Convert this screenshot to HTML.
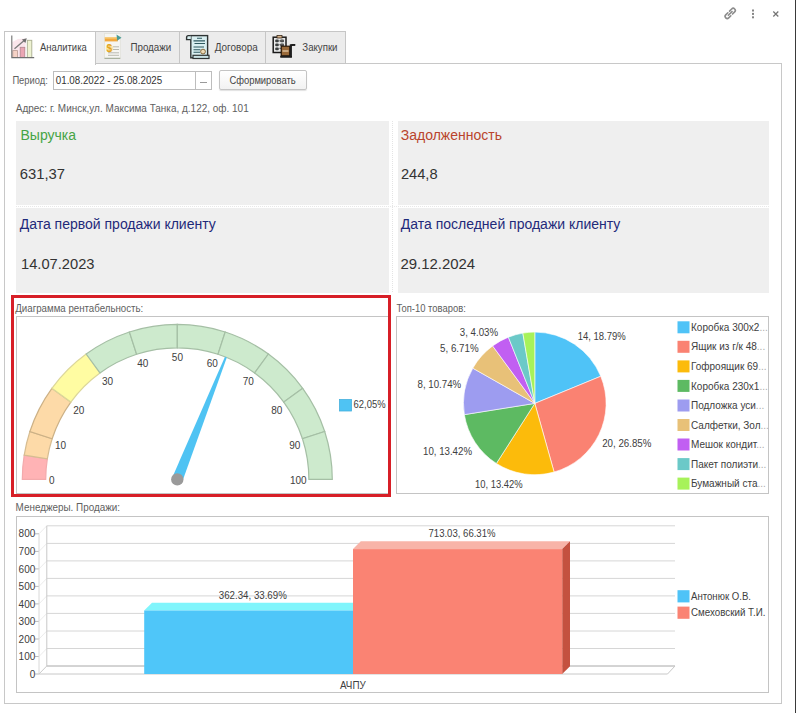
<!DOCTYPE html>
<html><head><meta charset="utf-8">
<style>
html,body{margin:0;padding:0;background:#fff;}
body{width:796px;height:713px;overflow:hidden;position:relative;font-family:"Liberation Sans",sans-serif;color:#333;}
.a{position:absolute;}
.t{position:absolute;white-space:nowrap;line-height:1;}
.tab{position:absolute;top:31px;height:33px;box-sizing:border-box;border:1px solid #c6c6c6;background:#ececec;}
.tab.act{background:#fff;border-bottom:none;height:34px;}
.box{position:absolute;background:#efefef;}
.frame{position:absolute;border:1px solid #c4c4c4;box-sizing:border-box;background:#fff;}
</style></head><body>
<!-- right dark edge -->
<div class="a" style="left:795px;top:0;width:1px;height:713px;background:#3a3a3a"></div>

<!-- top-right icons -->
<svg class="a" style="left:720px;top:0px" width="70" height="30" viewBox="720 0 70 30">
  <g transform="translate(730.2 13.4) rotate(-45)" fill="none" stroke="#8c8c8c" stroke-width="1.6" stroke-linecap="round">
    <path d="M-1.2 -2.1H-4.2A2.1 2.1 0 0 0 -4.2 2.1H-1.2"/>
    <path d="M1.2 -2.1H4.2A2.1 2.1 0 0 1 4.2 2.1H1.2"/>
    <path d="M-2.6 0H2.6"/>
  </g>
  <g fill="#858585">
    <rect x="752" y="9.5" width="2" height="2"/>
    <rect x="752" y="12.9" width="2" height="2"/>
    <rect x="752" y="16.3" width="2" height="2"/>
  </g>
  <g stroke="#747474" stroke-width="1.2">
    <path d="M773.3 11.5 l5 5 M778.3 11.5 l-5 5"/>
  </g>
</svg>

<!-- content panel -->
<div class="a" style="left:4px;top:63px;width:778px;height:641px;box-sizing:border-box;border:1px solid #c8c8c8;"></div>

<!-- tabs -->
<div class="tab" style="left:95px;width:85px"></div>
<div class="tab" style="left:179px;width:87px"></div>
<div class="tab" style="left:265px;width:81px"></div>
<div class="tab act" style="left:4px;width:92px"></div>


<!-- period row -->
<div class="a" style="left:53px;top:71px;width:159px;height:19px;box-sizing:border-box;border:1px solid #bdbdbd;background:#fff"></div>
<div class="a" style="left:195px;top:72px;width:1px;height:17px;background:#bdbdbd"></div>
<div class="a" style="left:200px;top:82px;width:7px;height:1px;background:#9a9a9a"></div>
<div class="a" style="left:219px;top:70px;width:88px;height:20px;box-sizing:border-box;border:1px solid #c4c4c4;border-radius:2px;background:linear-gradient(#fff,#f2f2f2);box-shadow:0 1px 1px rgba(0,0,0,0.12)"></div>


<!-- info boxes -->
<div class="box" style="left:16px;top:121px;width:373px;height:84px"></div>
<div class="box" style="left:398px;top:121px;width:371px;height:84px"></div>
<div class="box" style="left:16px;top:208px;width:373px;height:85px"></div>
<div class="box" style="left:398px;top:208px;width:371px;height:85px"></div>
<div class="a" style="left:392px;top:121px;width:1px;height:172px;background:repeating-linear-gradient(#e4e4e4 0 1px,transparent 1px 2px)"></div>
<div class="a" style="left:16px;top:206px;width:753px;height:1px;background:repeating-linear-gradient(90deg,#e8e8e8 0 1px,transparent 1px 2px)"></div>

<!-- chart frames -->
<div class="frame" style="left:16px;top:316px;width:373px;height:178px"></div>
<div class="frame" style="left:396px;top:316px;width:373px;height:178px"></div>
<div class="frame" style="left:16px;top:516px;width:753px;height:177px"></div>

<svg class="a" style="left:0;top:0" width="796" height="713" viewBox="0 0 796 713" font-family="Liberation Sans, sans-serif">

<g>
 <polygon points="12.3,57.3 12.3,42 18,39 26,38.5 25,57.3" fill="#f9e3ea" opacity="0.9"/>
 <rect x="12.8" y="50.6" width="4.6" height="6.9" fill="#f6d2c6" stroke="#b99a92" stroke-width="0.8"/>
 <rect x="20.2" y="47.3" width="4.6" height="10.2" fill="#eaa6b3" stroke="#b38690" stroke-width="0.8"/>
 <rect x="27.3" y="40.3" width="4.5" height="17.2" fill="#eef3d2" stroke="#a9ad90" stroke-width="0.9"/>
 <path d="M11.8 35.5V57.6H34.2" fill="none" stroke="#707070" stroke-width="1.1"/>
 <path d="M14.5 48.8L24.2 40.6" stroke="#7a7a7a" stroke-width="1.3"/>
 <polygon points="26.8,38.3 21.9,39.6 25.4,43" fill="#6f6f6f"/>
</g>
<g>
 <rect x="104.5" y="33.5" width="15.8" height="24.8" fill="#f6f6f2" stroke="#e2e2da" stroke-width="0.8"/>
 <rect x="104.8" y="37.4" width="13" height="4" fill="#f2a83e"/><rect x="104.8" y="37.4" width="13" height="1.2" fill="#f8cf7a"/>
 <polygon points="116.5,34.5 121.5,37.8 117.2,40.8" fill="#4b9b94"/>
 <circle cx="109.5" cy="48.3" r="3.6" fill="#fbe7a8"/>
 <text x="106.6" y="52.3" font-size="10" font-weight="bold" fill="#e3a41f">$</text>
 <path d="M113 46.8H119M113 49.5H119M108 52.8H119M108 55.3H119" stroke="#a9a9a0" stroke-width="0.8"/>
 <path d="M104.5 58.3H120.3" stroke="#9aa58f" stroke-width="1"/>
</g>
<g>
 <rect x="190.8" y="35.6" width="16.8" height="22.2" fill="#d9eff1" stroke="#2f3434" stroke-width="1.4"/>
 <path d="M190.8 35.6H188.3Q186.6 35.6 186.6 37.6V39.6H190.8" fill="#d9eff1" stroke="#2f3434" stroke-width="1.4"/>
 <path d="M197 38.3H202M193.5 40.9H205M194.5 43.5H205M193.5 47H204M193.5 49.7H200.5M193.5 52.3H200" stroke="#2f5a60" stroke-width="1.1"/>
 <rect x="193" y="55.3" width="16" height="3.2" fill="#c9e2e4" stroke="#2f3434" stroke-width="1.2"/>
 <circle cx="203" cy="51.6" r="2.4" fill="#ecd9b4" stroke="#7c5a2a" stroke-width="0.9"/>
</g>
<g>
 <rect x="273.2" y="37.2" width="12.8" height="15.3" fill="#e9eaea" stroke="#1a1a1a" stroke-width="1.5"/>
 <rect x="277" y="35.4" width="5" height="2.6" fill="#d8b48c" stroke="#3a2a1a" stroke-width="0.8"/>
 <g fill="#3c4040"><rect x="275.2" y="39.6" width="3.6" height="2.6" rx="1"/><rect x="280.2" y="39.6" width="3.8" height="2.6" rx="1"/>
 <rect x="275.2" y="43.6" width="3.6" height="2.6" rx="1"/><rect x="280.2" y="43.6" width="3.8" height="2.6" rx="1"/>
 <rect x="275.2" y="47.6" width="3.6" height="2.6" rx="1"/></g>
 <rect x="281.3" y="46.4" width="8.6" height="9.6" fill="#7a4a22" stroke="#1e1208" stroke-width="1"/>
 <path d="M282.3 48.6H289M282.3 53.4H289" stroke="#e0a060" stroke-width="1"/>
 <path d="M282.3 51H289" stroke="#f3dcc0" stroke-width="0.9"/>
 <path d="M291 57.3V46.5Q291 44.8 292.7 44.8H295.3" fill="none" stroke="#1a1a1a" stroke-width="1.7"/>
 <path d="M280.3 56.8H292" stroke="#1a1a1a" stroke-width="1.7"/>
</g>
 <path d="M279.5 40.8H284M279.5 44.6H284M279.5 48.4H283" stroke="#5a5a5a" stroke-width="1.4"/>
 <rect x="281.3" y="46.2" width="8.4" height="9.6" fill="#9a6a3a" stroke="#2a1a0a" stroke-width="1"/>
 <path d="M282.5 51H288.5" stroke="#f3dcc0" stroke-width="1.1"/>
 <path d="M290.6 56.8V45H295" fill="none" stroke="#1e1e1e" stroke-width="1.6"/>
 <path d="M280.5 56.5H291" stroke="#1e1e1e" stroke-width="1.6"/>
</g>
<text x="39.9" y="50.9" font-size="10" fill="#444" textLength="46.9" lengthAdjust="spacingAndGlyphs">Аналитика</text>
<text x="130.4" y="50.9" font-size="10" fill="#444" textLength="40.9" lengthAdjust="spacingAndGlyphs">Продажи</text>
<text x="214.7" y="50.9" font-size="10" fill="#444" textLength="43.1" lengthAdjust="spacingAndGlyphs">Договора</text>
<text x="302.3" y="50.9" font-size="10" fill="#444" textLength="35.2" lengthAdjust="spacingAndGlyphs">Закупки</text>
<text x="12.4" y="83.6" font-size="10" fill="#606060" textLength="35.4" lengthAdjust="spacingAndGlyphs">Период:</text>
<text x="55.8" y="83.8" font-size="10" fill="#333" textLength="106.4" lengthAdjust="spacingAndGlyphs">01.08.2022 - 25.08.2025</text>
<text x="229.4" y="83.6" font-size="10" fill="#444" textLength="66.3" lengthAdjust="spacingAndGlyphs">Сформировать</text>
<text x="15.8" y="111.6" font-size="10" fill="#606060" textLength="232.9" lengthAdjust="spacingAndGlyphs">Адрес: г. Минск,ул. Максима Танка, д.122, оф. 101</text>
<text x="20.5" y="139.6" font-size="14" fill="#45a445">Выручка</text>
<text x="19.8" y="178.5" font-size="14.5" fill="#333" textLength="45.3" lengthAdjust="spacingAndGlyphs">631,37</text>
<text x="400.8" y="140" font-size="14" fill="#b9442c">Задолженность</text>
<text x="400.9" y="179" font-size="14.5" fill="#333" textLength="36.7" lengthAdjust="spacingAndGlyphs">244,8</text>
<text x="19.7" y="229.3" font-size="14" fill="#1f2a7a">Дата первой продажи клиенту</text>
<text x="21.0" y="268.5" font-size="14.5" fill="#333" textLength="73.5" lengthAdjust="spacingAndGlyphs">14.07.2023</text>
<text x="400.8" y="229.3" font-size="14" fill="#1f2a7a">Дата последней продажи клиенту</text>
<text x="400.4" y="268.8" font-size="14.5" fill="#333" textLength="74.8" lengthAdjust="spacingAndGlyphs">29.12.2024</text>
<text x="15.3" y="312" font-size="10" fill="#606060" textLength="127.9" lengthAdjust="spacingAndGlyphs">Диаграмма рентабельность:</text>
<text x="396.5" y="311.6" font-size="10" fill="#606060" textLength="69.3" lengthAdjust="spacingAndGlyphs">Топ-10 товаров:</text>
<text x="15.6" y="511.3" font-size="10" fill="#606060" textLength="104.5" lengthAdjust="spacingAndGlyphs">Менеджеры. Продажи:</text>
<path d="M22.30 479.40A155.0 155.0 0 0 1 24.21 455.15L47.32 458.81A131.6 131.6 0 0 0 45.70 479.40Z" fill="#ffb3b5" stroke="#f3aaac" stroke-width="1.2"/>
<path d="M24.21 455.15A155.0 155.0 0 0 1 29.89 431.50L52.14 438.73A131.6 131.6 0 0 0 47.32 458.81Z" fill="#fddaa8" stroke="#d6bd92" stroke-width="1.2"/>
<path d="M29.89 431.50A155.0 155.0 0 0 1 51.90 388.29L70.83 402.05A131.6 131.6 0 0 0 52.14 438.73Z" fill="#fddaa8" stroke="#ccb186" stroke-width="1.2"/>
<path d="M51.90 388.29A155.0 155.0 0 0 1 86.19 354.00L99.95 372.93A131.6 131.6 0 0 0 70.83 402.05Z" fill="#fffca2" stroke="#dcd79a" stroke-width="1.2"/>
<path d="M86.19 354.00A155.0 155.0 0 0 1 129.40 331.99L136.63 354.24A131.6 131.6 0 0 0 99.95 372.93Z" fill="#cdeacd" stroke="#a5bfa5" stroke-width="1.2"/>
<path d="M129.40 331.99A155.0 155.0 0 0 1 177.30 324.40L177.30 347.80A131.6 131.6 0 0 0 136.63 354.24Z" fill="#cdeacd" stroke="#a5bfa5" stroke-width="1.2"/>
<path d="M177.30 324.40A155.0 155.0 0 0 1 225.20 331.99L217.97 354.24A131.6 131.6 0 0 0 177.30 347.80Z" fill="#cdeacd" stroke="#a5bfa5" stroke-width="1.2"/>
<path d="M225.20 331.99A155.0 155.0 0 0 1 268.41 354.00L254.65 372.93A131.6 131.6 0 0 0 217.97 354.24Z" fill="#cdeacd" stroke="#a5bfa5" stroke-width="1.2"/>
<path d="M268.41 354.00A155.0 155.0 0 0 1 302.70 388.29L283.77 402.05A131.6 131.6 0 0 0 254.65 372.93Z" fill="#cdeacd" stroke="#a5bfa5" stroke-width="1.2"/>
<path d="M302.70 388.29A155.0 155.0 0 0 1 324.71 431.50L302.46 438.73A131.6 131.6 0 0 0 283.77 402.05Z" fill="#cdeacd" stroke="#a5bfa5" stroke-width="1.2"/>
<path d="M324.71 431.50A155.0 155.0 0 0 1 332.30 479.40L308.90 479.40A131.6 131.6 0 0 0 302.46 438.73Z" fill="#cdeacd" stroke="#a5bfa5" stroke-width="1.2"/>
<path d="M182.32 481.40L226.83 357.58L224.97 356.84L172.28 477.40Z" fill="#4fc3f3"/>
<circle cx="177.3" cy="479.4" r="6.2" fill="#9a9a9a"/>
<g font-size="10" fill="#404040" text-anchor="middle"><text x="51.8" y="483.7">0</text><text x="60.6" y="449.4">10</text><text x="78.8" y="414.2">20</text><text x="107.5" y="385.2">30</text><text x="142.8" y="366.8">40</text><text x="177.4" y="361.1">50</text><text x="212.3" y="366.8">60</text><text x="248.2" y="385.4">70</text><text x="276.7" y="413.9">80</text><text x="294.8" y="449.3">90</text><text x="298.3" y="484.0">100</text></g>
<rect x="339.5" y="399.5" width="12" height="11.5" fill="#4fc3f3" stroke="#45b0dc" stroke-width="0.8"/>
<text x="353.6" y="408.4" font-size="10" fill="#404040" textLength="32" lengthAdjust="spacingAndGlyphs">62,05%</text>
<path d="M534.8 403.4L534.80 332.10A71.3 71.3 0 0 1 600.74 376.28Z" fill="#4fc3f7" stroke="#fff" stroke-width="0.6" stroke-linejoin="round"/>
<path d="M534.8 403.4L600.74 376.28A71.3 71.3 0 0 1 554.09 472.04Z" fill="#fa8272" stroke="#fff" stroke-width="0.6" stroke-linejoin="round"/>
<path d="M534.8 403.4L554.09 472.04A71.3 71.3 0 0 1 496.37 463.46Z" fill="#fcbb0b" stroke="#fff" stroke-width="0.6" stroke-linejoin="round"/>
<path d="M534.8 403.4L496.37 463.46A71.3 71.3 0 0 1 464.39 414.64Z" fill="#5dba62" stroke="#fff" stroke-width="0.6" stroke-linejoin="round"/>
<path d="M534.8 403.4L464.39 414.64A71.3 71.3 0 0 1 472.80 368.19Z" fill="#9d9cf0" stroke="#fff" stroke-width="0.6" stroke-linejoin="round"/>
<path d="M534.8 403.4L472.80 368.19A71.3 71.3 0 0 1 492.64 345.90Z" fill="#e8c178" stroke="#fff" stroke-width="0.6" stroke-linejoin="round"/>
<path d="M534.8 403.4L492.64 345.90A71.3 71.3 0 0 1 508.39 337.17Z" fill="#c15ff2" stroke="#fff" stroke-width="0.6" stroke-linejoin="round"/>
<path d="M534.8 403.4L508.39 337.17A71.3 71.3 0 0 1 522.85 333.11Z" fill="#6bc9c8" stroke="#fff" stroke-width="0.6" stroke-linejoin="round"/>
<path d="M534.8 403.4L522.85 333.11A71.3 71.3 0 0 1 534.80 332.10Z" fill="#a7f25a" stroke="#fff" stroke-width="0.6" stroke-linejoin="round"/>
<g font-size="10" fill="#404040"><text x="459.8" y="336.2" textLength="38.3" lengthAdjust="spacingAndGlyphs">3, 4.03%</text><text x="440.1" y="352.0" textLength="38.5" lengthAdjust="spacingAndGlyphs">5, 6.71%</text><text x="417.6" y="388.4" textLength="43.6" lengthAdjust="spacingAndGlyphs">8, 10.74%</text><text x="423.0" y="455.2" textLength="49" lengthAdjust="spacingAndGlyphs">10, 13.42%</text><text x="475.0" y="487.9" textLength="47.7" lengthAdjust="spacingAndGlyphs">10, 13.42%</text><text x="577.7" y="340.2" textLength="48.1" lengthAdjust="spacingAndGlyphs">14, 18.79%</text><text x="602.2" y="446.8" textLength="49.2" lengthAdjust="spacingAndGlyphs">20, 26.85%</text></g>
<rect x="677.5" y="321.3" width="12" height="12" fill="#4fc3f7"/>
<text x="691" y="330.9" font-size="10" fill="#404040">Коробка 300x2<tspan fill="#aaa">...</tspan></text>
<rect x="677.5" y="340.8" width="12" height="12" fill="#fa8272"/>
<text x="691" y="350.4" font-size="10" fill="#404040">Ящик из г/к 48<tspan fill="#aaa">...</tspan></text>
<rect x="677.5" y="360.4" width="12" height="12" fill="#fcbb0b"/>
<text x="691" y="370.0" font-size="10" fill="#404040">Гофроящик 69<tspan fill="#aaa">...</tspan></text>
<rect x="677.5" y="379.9" width="12" height="12" fill="#5dba62"/>
<text x="691" y="389.5" font-size="10" fill="#404040">Коробка 230x1<tspan fill="#aaa">...</tspan></text>
<rect x="677.5" y="399.5" width="12" height="12" fill="#9d9cf0"/>
<text x="691" y="409.1" font-size="10" fill="#404040">Подложка уси<tspan fill="#aaa">...</tspan></text>
<rect x="677.5" y="419.0" width="12" height="12" fill="#e8c178"/>
<text x="691" y="428.6" font-size="10" fill="#404040">Салфетки, Зол<tspan fill="#aaa">...</tspan></text>
<rect x="677.5" y="438.5" width="12" height="12" fill="#c15ff2"/>
<text x="691" y="448.1" font-size="10" fill="#404040">Мешок кондит<tspan fill="#aaa">...</tspan></text>
<rect x="677.5" y="458.1" width="12" height="12" fill="#6bc9c8"/>
<text x="691" y="467.7" font-size="10" fill="#404040">Пакет полиэти<tspan fill="#aaa">...</tspan></text>
<rect x="677.5" y="477.6" width="12" height="12" fill="#a7f25a"/>
<text x="691" y="487.2" font-size="10" fill="#404040">Бумажный ста<tspan fill="#aaa">...</tspan></text>
<line x1="46.8" y1="666.0" x2="675" y2="666.0" stroke="#d6d6d6" stroke-width="1"/>
<line x1="39" y1="674.0" x2="46.8" y2="666.0" stroke="#ececec" stroke-width="1"/>
<line x1="35" y1="674.0" x2="39" y2="674.0" stroke="#bbb" stroke-width="1"/>
<line x1="46.8" y1="648.5" x2="675" y2="648.5" stroke="#d6d6d6" stroke-width="1"/>
<line x1="39" y1="656.5" x2="46.8" y2="648.5" stroke="#ececec" stroke-width="1"/>
<line x1="35" y1="656.5" x2="39" y2="656.5" stroke="#bbb" stroke-width="1"/>
<line x1="46.8" y1="631.0" x2="675" y2="631.0" stroke="#d6d6d6" stroke-width="1"/>
<line x1="39" y1="639.0" x2="46.8" y2="631.0" stroke="#ececec" stroke-width="1"/>
<line x1="35" y1="639.0" x2="39" y2="639.0" stroke="#bbb" stroke-width="1"/>
<line x1="46.8" y1="613.4" x2="675" y2="613.4" stroke="#d6d6d6" stroke-width="1"/>
<line x1="39" y1="621.4" x2="46.8" y2="613.4" stroke="#ececec" stroke-width="1"/>
<line x1="35" y1="621.4" x2="39" y2="621.4" stroke="#bbb" stroke-width="1"/>
<line x1="46.8" y1="595.9" x2="675" y2="595.9" stroke="#d6d6d6" stroke-width="1"/>
<line x1="39" y1="603.9" x2="46.8" y2="595.9" stroke="#ececec" stroke-width="1"/>
<line x1="35" y1="603.9" x2="39" y2="603.9" stroke="#bbb" stroke-width="1"/>
<line x1="46.8" y1="578.4" x2="675" y2="578.4" stroke="#d6d6d6" stroke-width="1"/>
<line x1="39" y1="586.4" x2="46.8" y2="578.4" stroke="#ececec" stroke-width="1"/>
<line x1="35" y1="586.4" x2="39" y2="586.4" stroke="#bbb" stroke-width="1"/>
<line x1="46.8" y1="560.9" x2="675" y2="560.9" stroke="#d6d6d6" stroke-width="1"/>
<line x1="39" y1="568.9" x2="46.8" y2="560.9" stroke="#ececec" stroke-width="1"/>
<line x1="35" y1="568.9" x2="39" y2="568.9" stroke="#bbb" stroke-width="1"/>
<line x1="46.8" y1="543.4" x2="675" y2="543.4" stroke="#d6d6d6" stroke-width="1"/>
<line x1="39" y1="551.4" x2="46.8" y2="543.4" stroke="#ececec" stroke-width="1"/>
<line x1="35" y1="551.4" x2="39" y2="551.4" stroke="#bbb" stroke-width="1"/>
<line x1="46.8" y1="525.8" x2="675" y2="525.8" stroke="#d6d6d6" stroke-width="1"/>
<line x1="39" y1="533.8" x2="46.8" y2="525.8" stroke="#ececec" stroke-width="1"/>
<line x1="35" y1="533.8" x2="39" y2="533.8" stroke="#bbb" stroke-width="1"/>
<g font-size="10" fill="#404040" text-anchor="end"><text x="35.3" y="677.6">0</text><text x="35.3" y="660.1">100</text><text x="35.3" y="642.6">200</text><text x="35.3" y="625.0">300</text><text x="35.3" y="607.5">400</text><text x="35.3" y="590.0">500</text><text x="35.3" y="572.5">600</text><text x="35.3" y="555.0">700</text><text x="35.3" y="537.4">800</text></g>
<line x1="46.8" y1="525.8" x2="46.8" y2="666.0" stroke="#c8c8c8" stroke-width="1"/>
<line x1="39" y1="533.8" x2="39" y2="674.0" stroke="#d8d8d8" stroke-width="1"/>
<line x1="39" y1="674" x2="667.5" y2="674" stroke="#c8c8c8" stroke-width="1"/>
<line x1="46.8" y1="666" x2="675" y2="666" stroke="#bcbcbc" stroke-width="1"/>
<line x1="667.5" y1="674" x2="675" y2="666" stroke="#c8c8c8" stroke-width="1"/>
<line x1="39" y1="674" x2="46.8" y2="666" stroke="#cfcfcf" stroke-width="1"/>
<path d="M144.2 610.5L152 602.7L360.8 602.7L353 610.5Z" fill="#80f5fc"/>
<rect x="144.2" y="610.5" width="208.8" height="63.5" fill="#4fc6f9"/>
<path d="M353 549.1L360.8 541.3L570 541.3L562.2 549.1Z" fill="#f8b4a8"/>
<path d="M562.2 549.1L570 541.3L570 666.2L562.2 674Z" fill="#c4513f"/>
<rect x="353" y="549.1" width="209.2" height="124.9" fill="#fa8373"/>
<text x="218.8" y="598.7" font-size="10" fill="#404040" textLength="68" lengthAdjust="spacingAndGlyphs">362.34, 33.69%</text>
<text x="428.5" y="537.1" font-size="10" fill="#404040" textLength="67" lengthAdjust="spacingAndGlyphs">713.03, 66.31%</text>
<text x="340.1" y="689.4" font-size="10" fill="#404040" textLength="25.6" lengthAdjust="spacingAndGlyphs">АЧПУ</text>
<rect x="677.5" y="590.2" width="12" height="12.2" fill="#4fc3f7"/>
<rect x="677.5" y="606.6" width="12" height="12.2" fill="#fa8373"/>
<text x="691" y="599.8" font-size="10" fill="#404040" textLength="60" lengthAdjust="spacingAndGlyphs">Антонюк О.В.</text>
<text x="691" y="616.4" font-size="10" fill="#404040" textLength="74.4" lengthAdjust="spacingAndGlyphs">Смеховский Т.И.</text>
</svg>

<!-- red highlight -->
<div class="a" style="left:11px;top:295px;width:380px;height:202px;box-sizing:border-box;border:3px solid #d71f27"></div>

</body></html>
